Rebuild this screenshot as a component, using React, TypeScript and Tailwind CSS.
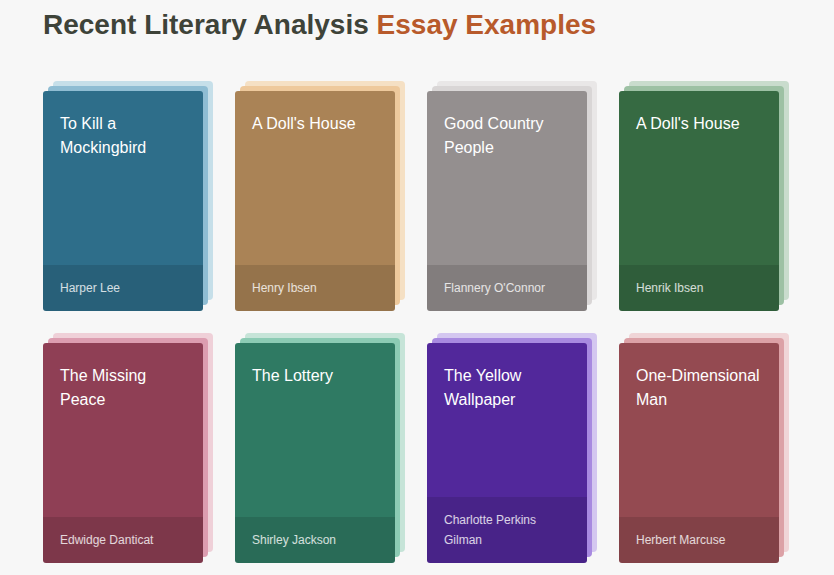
import React from "react";

type Book = { title: string; author: string; main: string; l1: string; l2: string };

const books: Book[] = [
  { title: "To Kill a Mockingbird", author: "Harper Lee", main: "bg-[#2e6e8a]", l1: "bg-[#8fbdd3]", l2: "bg-[#c6dfe9]" },
  { title: "A Doll's House", author: "Henry Ibsen", main: "bg-[#aa8356]", l1: "bg-[#eec99c]", l2: "bg-[#f5e0c4]" },
  { title: "Good Country People", author: "Flannery O'Connor", main: "bg-[#948f8f]", l1: "bg-[#d9d6d6]", l2: "bg-[#e9e7e7]" },
  { title: "A Doll's House", author: "Henrik Ibsen", main: "bg-[#366a42]", l1: "bg-[#9dc1a4]", l2: "bg-[#c9dccd]" },
  { title: "The Missing Peace", author: "Edwidge Danticat", main: "bg-[#8f3f55]", l1: "bg-[#dc9db0]", l2: "bg-[#efd0d8]" },
  { title: "The Lottery", author: "Shirley Jackson", main: "bg-[#2f7a63]", l1: "bg-[#8ccbb4]", l2: "bg-[#c6e4d8]" },
  { title: "The Yellow Wallpaper", author: "Charlotte Perkins Gilman", main: "bg-[#52289b]", l1: "bg-[#a88ae0]", l2: "bg-[#d4c7f0]" },
  { title: "One-Dimensional Man", author: "Herbert Marcuse", main: "bg-[#944a51]", l1: "bg-[#dca1a6]", l2: "bg-[#f0d5d7]" },
];

function Card({ b }: { b: Book }) {
  return (
    <div className="relative w-[170px] pt-[10px]">
      <div className={`absolute left-[10px] top-0 w-[160px] h-[219px] rounded-[4px] ${b.l2}`} />
      <div className={`absolute left-[5px] top-[5px] w-[160px] h-[219px] rounded-[4px] ${b.l1}`} />
      <div className={`relative w-[160px] h-[220px] rounded-[3px] overflow-hidden flex flex-col ${b.main}`}>
        <div className="flex-1 px-[17px] pt-[21px] text-[16px] leading-[24px] text-white">{b.title}</div>
        <div className="bg-black/[0.12] px-[17px] py-[13px] text-[12px] leading-[20px] text-white/80">{b.author}</div>
      </div>
    </div>
  );
}

export default function App() {
  return (
    <div className="min-h-[575px] w-[834px] bg-[#f7f7f7] px-[43px] pt-[7px]" style={{ fontFamily: '"Liberation Sans", Arial, sans-serif' }}>
      <h1 className="text-[28px] leading-[36px] font-bold text-[#3e4339]">
        Recent Literary Analysis <span className="text-[#b85a2b]">Essay Examples</span>
      </h1>
      <div className="mt-[38px] grid grid-cols-[repeat(4,160px)] gap-x-[32px] gap-y-[22px]">
        {books.map((b, i) => (
          <Card key={i} b={b} />
        ))}
      </div>
    </div>
  );
}
